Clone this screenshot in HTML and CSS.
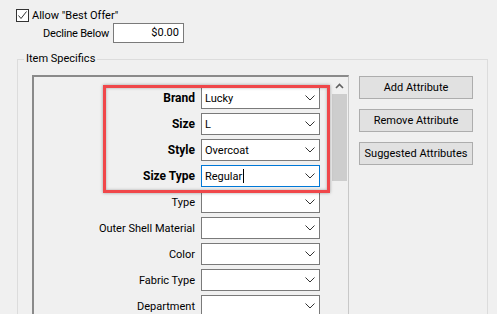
FILE: index.html
```html
<!DOCTYPE html>
<html lang="en">
<head>
    <meta charset="UTF-8">
    <title>Item Specifics</title>
    <link rel="stylesheet" href="styles.css">
</head>
<body>
    <!-- best offer -->
    <div class="offer">
        <label class="check-row">
            <span class="checkbox">
                <svg width="11" height="11" viewBox="0 0 11 11"><polyline points="1.5,5.5 4,8.5 9.5,1.5" fill="none" stroke="#333" stroke-width="1"/></svg>
            </span>
            Allow "Best Offer"
        </label>
        <div class="decline-row">
            <span class="decline-label">Decline Below</span>
            <span class="money">$0.00</span>
        </div>
    </div>

    <!-- item specifics -->
    <fieldset class="specifics">
        <legend>Item Specifics</legend>
        <div class="specifics-body">
            <div class="panel">
                <div class="rows">
                    <div class="row strong"><span class="label">Brand</span><div class="combo"><span>Lucky</span><svg class="chev" width="10" height="6" viewBox="0 0 10 6"><polyline points="0.5,0.5 5,5 9.5,0.5" fill="none" stroke="#333"/></svg></div></div>
                    <div class="row strong"><span class="label">Size</span><div class="combo"><span>L</span><svg class="chev" width="10" height="6" viewBox="0 0 10 6"><polyline points="0.5,0.5 5,5 9.5,0.5" fill="none" stroke="#333"/></svg></div></div>
                    <div class="row strong"><span class="label">Style</span><div class="combo"><span>Overcoat</span><svg class="chev" width="10" height="6" viewBox="0 0 10 6"><polyline points="0.5,0.5 5,5 9.5,0.5" fill="none" stroke="#333"/></svg></div></div>
                    <div class="row strong"><span class="label">Size Type</span><div class="combo focused"><span>Regular<i class="caret"></i></span><svg class="chev" width="10" height="6" viewBox="0 0 10 6"><polyline points="0.5,0.5 5,5 9.5,0.5" fill="none" stroke="#333"/></svg></div></div>
                    <div class="row"><span class="label">Type</span><div class="combo"><span></span><svg class="chev" width="10" height="6" viewBox="0 0 10 6"><polyline points="0.5,0.5 5,5 9.5,0.5" fill="none" stroke="#333"/></svg></div></div>
                    <div class="row"><span class="label">Outer Shell Material</span><div class="combo"><span></span><svg class="chev" width="10" height="6" viewBox="0 0 10 6"><polyline points="0.5,0.5 5,5 9.5,0.5" fill="none" stroke="#333"/></svg></div></div>
                    <div class="row"><span class="label">Color</span><div class="combo"><span></span><svg class="chev" width="10" height="6" viewBox="0 0 10 6"><polyline points="0.5,0.5 5,5 9.5,0.5" fill="none" stroke="#333"/></svg></div></div>
                    <div class="row"><span class="label">Fabric Type</span><div class="combo"><span></span><svg class="chev" width="10" height="6" viewBox="0 0 10 6"><polyline points="0.5,0.5 5,5 9.5,0.5" fill="none" stroke="#333"/></svg></div></div>
                    <div class="row"><span class="label">Department</span><div class="combo"><span></span><svg class="chev" width="10" height="6" viewBox="0 0 10 6"><polyline points="0.5,0.5 5,5 9.5,0.5" fill="none" stroke="#333"/></svg></div></div>
                </div>
                <div class="scrollbar">
                    <div class="arrow">
                        <svg width="9" height="6" viewBox="0 0 9 6"><polyline points="1,5 4.5,1.5 8,5" fill="none" stroke="#606060" stroke-width="1.6"/></svg>
                    </div>
                    <div class="thumb"></div>
                </div>
                <!-- red annotation -->
                <div class="highlight"></div>
            </div>
            <div class="buttons">
                <button>Add Attribute</button>
                <button>Remove Attribute</button>
                <button>Suggested Attributes</button>
            </div>
        </div>
    </fieldset>
</body>
</html>
```

FILE: styles.css
```css
/* base */
* {
    margin: 0;
    padding: 0;
    box-sizing: border-box;
}

body {
    font-family: Roboto, "Noto Sans", sans-serif;
    font-size: 11px;
    color: #000;
    background-color: #f0f0f0;
    overflow: hidden;
}

/* best offer */
.offer {
    padding: 9px 0 0 16px;
}

.check-row {
    display: flex;
    align-items: center;
    gap: 3px;
    height: 13px;
}

.checkbox {
    width: 13px;
    height: 13px;
    border: 1px solid #333;
    background-color: #fff;
    display: flex;
    align-items: center;
    justify-content: center;
}

.decline-row {
    display: flex;
    align-items: center;
    margin: 1px 0 0 27px;
    height: 20px;
}

.decline-label {
    flex-shrink: 0;
    width: 70px;
    white-space: nowrap;
    letter-spacing: -0.2px;
}

.money {
    flex-shrink: 0;
    width: 71px;
    height: 20px;
    border: 1px solid #7a7a7a;
    background-color: #fff;
    text-align: right;
    padding-right: 4px;
    line-height: 18px;
}

/* item specifics group */
.specifics {
    margin: 9px 0 0 17px;
    width: 471px;
    height: 300px;
    border: 1px solid #dcdcdc;
    padding: 9px 0 0 14px;
}

.specifics legend {
    margin-left: -8px;
    padding: 0 2px;
    line-height: 14px;
}

.specifics-body {
    display: flex;
    align-items: flex-start;
}

.panel {
    position: relative;
    display: flex;
    width: 317px;
    height: 260px;
    border-top: 2px solid #8a8a8a;
    border-left: 2px solid #8a8a8a;
    border-right: 1px solid #c8c8c8;
}

.rows {
    flex: 1;
    padding-top: 10px;
}

.row {
    display: flex;
    align-items: center;
    gap: 6px;
    height: 22px;
    margin-bottom: 4px;
}

.label {
    width: 161px;
    text-align: right;
    white-space: nowrap;
}

.strong .label {
    font-weight: bold;
    font-size: 12px;
}

.combo {
    width: 119px;
    height: 22px;
    border: 1px solid #7a7a7a;
    background-color: #fff;
    display: flex;
    align-items: center;
    justify-content: space-between;
    padding: 0 4px 0 3px;
}

.combo.focused {
    border-color: #0078d7;
}

.caret {
    display: inline-block;
    width: 1px;
    height: 14px;
    background-color: #000;
    vertical-align: -3px;
    margin-left: 1px;
}

.scrollbar {
    width: 17px;
    display: flex;
    flex-direction: column;
    align-items: center;
}

.arrow {
    height: 17px;
    display: flex;
    align-items: center;
    justify-content: center;
}

.thumb {
    width: 15px;
    height: 87px;
    background-color: #cdcdcd;
}

.highlight {
    position: absolute;
    left: 69px;
    top: 8px;
    width: 227px;
    height: 108px;
    border: 3px solid #f0474a;
    box-shadow: 0 0 3px rgba(0, 0, 0, 0.35), inset 0 0 3px rgba(0, 0, 0, 0.3);
}

/* buttons */
.buttons {
    display: flex;
    flex-direction: column;
    gap: 10px;
    margin: 1px 0 0 10px;
}

.buttons button {
    width: 114px;
    height: 23px;
    font-family: inherit;
    font-size: 11px;
    color: #000;
    background-color: #e1e1e1;
    border: 1px solid #adadad;
}
```
